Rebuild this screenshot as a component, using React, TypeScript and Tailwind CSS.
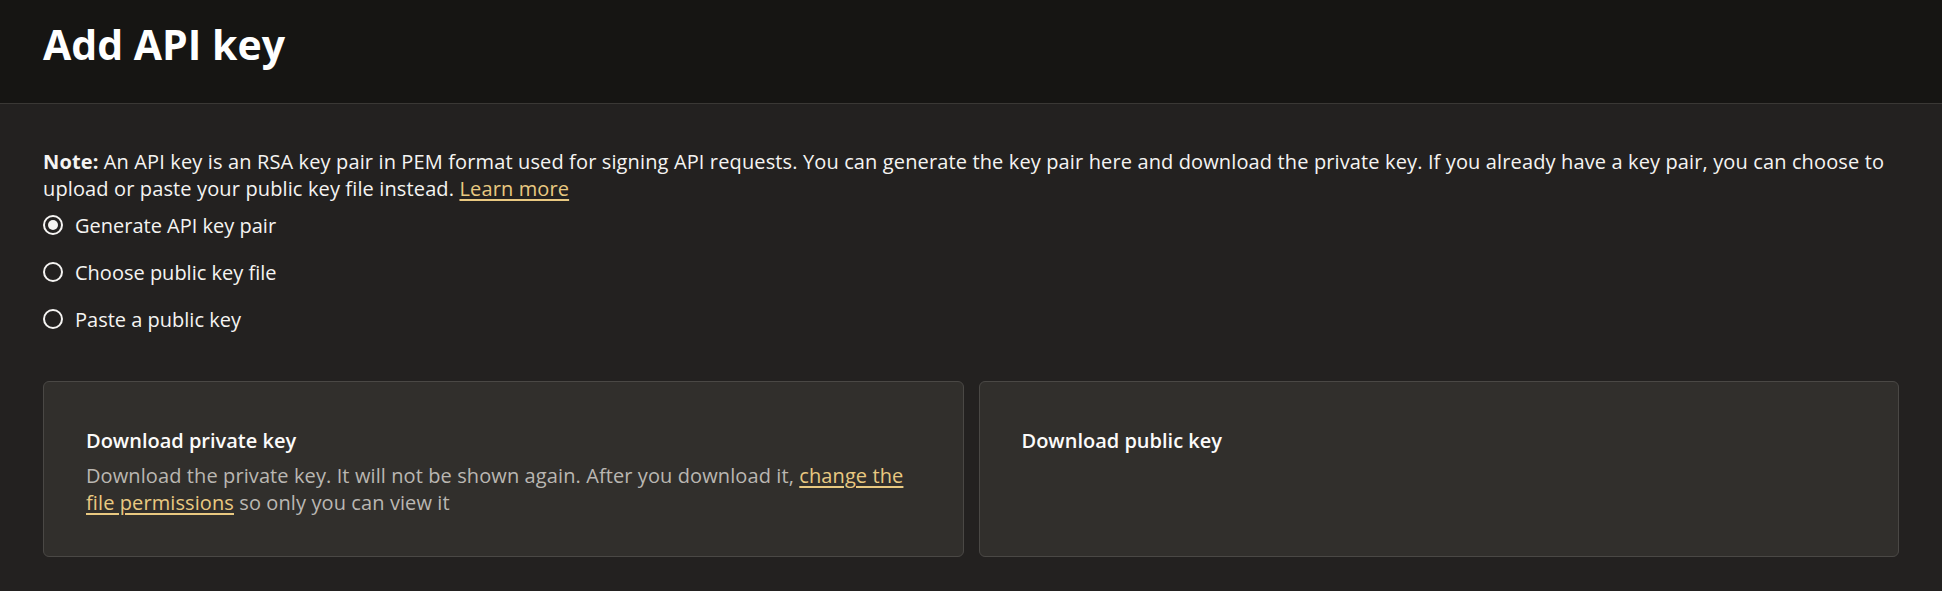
import React from "react"

const font = { fontFamily: "'Open Sans', 'Liberation Sans', sans-serif" }

function Radio({ label, checked }: { label: string; checked?: boolean }) {
  return (
    <label className="flex h-[28px] items-center gap-[12px] cursor-pointer">
      <span className="flex h-[20px] w-[20px] items-center justify-center rounded-full border-2 border-[#f5f4f2]">
        {checked && <span className="h-[10px] w-[10px] rounded-full bg-[#f5f4f2]"></span>}
      </span>
      <span className="text-[20px] leading-[27px] text-[#f5f4f2]">{label}</span>
    </label>
  )
}

function Card({ title, children }: { title: string; children?: React.ReactNode }) {
  return (
    <div className="rounded-[6px] border border-[#4a4845] bg-[#312f2c] px-[42px] pt-[45px] pb-[40px]">
      <h3 className="text-[20px] font-semibold leading-[27px] text-[#fcfbfa]">{title}</h3>
      {children && (
        <p className="mt-[8px] text-[20px] leading-[27px] tracking-[0.1px] text-[#bab7b2]">{children}</p>
      )}
    </div>
  )
}

export default function App() {
  return (
    <div className="min-h-screen bg-[#232120]" style={font}>
      <header className="flex h-[104px] items-center border-b border-[#3a3835] bg-[#161513] px-[43px] pb-[15px]">
        <h1 className="text-[41px] font-bold leading-none text-white">Add API key</h1>
      </header>

      <main className="px-[43px] pt-[44px] pb-[33px]">
        <p className="text-[20px] leading-[27px] tracking-[0.13px] text-[#f5f4f2]">
          <span className="font-bold">Note:</span> An API key is an RSA key pair in PEM format used for signing API
          requests. You can generate the key pair here and download the private key. If you already have a key pair,
          you can choose to upload or paste your public key file instead.{" "}
          <a href="#" className="text-[#e9c981] underline underline-offset-[3px]">
            Learn more
          </a>
        </p>

        <div className="mt-[9px] flex flex-col gap-[19px]">
          <Radio label="Generate API key pair" checked />
          <Radio label="Choose public key file" />
          <Radio label="Paste a public key" />
        </div>

        <div className="mt-[48px] grid grid-cols-2 gap-[15px]">
          <Card title="Download private key">
            Download the private key. It will not be shown again. After you download it,{" "}
            <a href="#" className="text-[#e9c981] underline underline-offset-[3px]">
              change the file permissions
            </a>{" "}
            so only you can view it
          </Card>
          <Card title="Download public key" />
        </div>
      </main>
    </div>
  )
}
